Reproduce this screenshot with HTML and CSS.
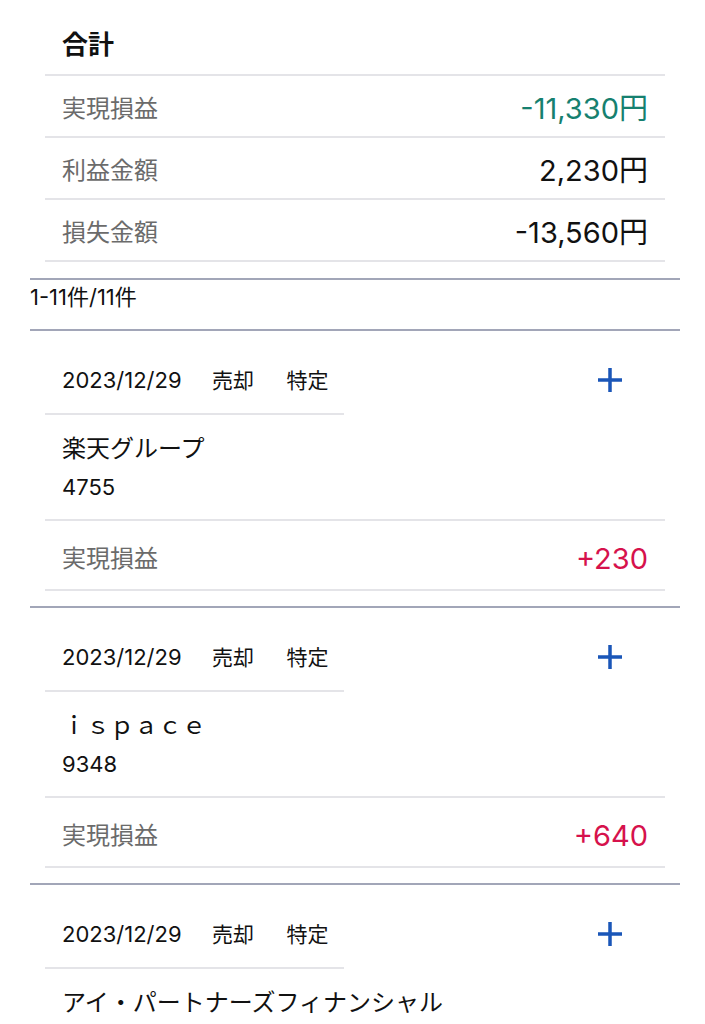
FILE: index.html
```html
<!DOCTYPE html>
<html lang="ja">
<head>
    <meta charset="UTF-8">
    <meta name="viewport" content="width=device-width, initial-scale=1.0">
    <title>実現損益</title>
    <link rel="stylesheet" href="styles.css">
</head>
<body>
    <!-- Totals -->
    <div class="summary">
        <h2 class="summary-title">合計</h2>
        <div class="row">
            <span class="row-label">実現損益</span>
            <span class="row-value loss">-11,330円</span>
        </div>
        <div class="row">
            <span class="row-label">利益金額</span>
            <span class="row-value">2,230円</span>
        </div>
        <div class="row">
            <span class="row-label">損失金額</span>
            <span class="row-value">-13,560円</span>
        </div>
    </div>

    <div class="list">
        <div class="list-count">1-11件/11件</div>

        <div class="card">
            <div class="card-head">
                <div class="card-meta">
                    <span class="trade-date">2023/12/29</span>
                    <span class="trade-tag">売却</span>
                    <span class="trade-tag">特定</span>
                </div>
                <button class="expand" type="button" aria-label="詳細">
                    <svg width="26" height="26" viewBox="0 0 26 26"><path d="M13 1v24M1 13h24" stroke="#1a56b8" stroke-width="3.5" fill="none"/></svg>
                </button>
            </div>
            <div class="card-body">
                <div class="stock-name">楽天グループ</div>
                <div class="stock-code">4755</div>
            </div>
            <div class="card-row">
                <span class="row-label">実現損益</span>
                <span class="row-value gain">+230</span>
            </div>
        </div>

        <div class="card">
            <div class="card-head">
                <div class="card-meta">
                    <span class="trade-date">2023/12/29</span>
                    <span class="trade-tag">売却</span>
                    <span class="trade-tag">特定</span>
                </div>
                <button class="expand" type="button" aria-label="詳細">
                    <svg width="26" height="26" viewBox="0 0 26 26"><path d="M13 1v24M1 13h24" stroke="#1a56b8" stroke-width="3.5" fill="none"/></svg>
                </button>
            </div>
            <div class="card-body">
                <div class="stock-name">ｉｓｐａｃｅ</div>
                <div class="stock-code">9348</div>
            </div>
            <div class="card-row">
                <span class="row-label">実現損益</span>
                <span class="row-value gain">+640</span>
            </div>
        </div>

        <div class="card">
            <div class="card-head">
                <div class="card-meta">
                    <span class="trade-date">2023/12/29</span>
                    <span class="trade-tag">売却</span>
                    <span class="trade-tag">特定</span>
                </div>
                <button class="expand" type="button" aria-label="詳細">
                    <svg width="26" height="26" viewBox="0 0 26 26"><path d="M13 1v24M1 13h24" stroke="#1a56b8" stroke-width="3.5" fill="none"/></svg>
                </button>
            </div>
            <div class="card-body">
                <div class="stock-name">アイ・パートナーズフィナンシャル</div>
                <div class="stock-code">7345</div>
            </div>
            <div class="card-row">
                <span class="row-label">実現損益</span>
                <span class="row-value gain">+120</span>
            </div>
        </div>
    </div>
</body>
</html>
```

FILE: styles.css
```css
body {
    margin: 0;
    background-color: #fff;
    color: #111;
    font-family: Inter, "Noto Sans CJK JP", sans-serif;
}

/* Totals */
.summary {
    margin: 0 40px 0 45px;
}
.summary-title {
    margin: 0;
    padding: 28px 17px 12px;
    font-size: 26px;
    font-weight: bold;
    line-height: 34px;
    border-bottom: 2px solid #e4e4e8;
}
.row {
    display: flex;
    justify-content: space-between;
    align-items: center;
    height: 60px;
    padding: 0 17px;
    border-bottom: 2px solid #e4e4e8;
}
.row-label {
    font-size: 24px;
    color: #6b6b6b;
}
.row-value {
    font-size: 29px;
    color: #111;
}
.row-value.loss {
    color: #16806f;
}
.row-value.gain {
    color: #d6124c;
}

/* List */
.list {
    margin: 16px 25px 0 30px;
    border-top: 2px solid #a2a6b8;
}
.list-count {
    font-size: 22px;
    line-height: 34px;
    padding-bottom: 15px;
}
.card {
    border-top: 2px solid #a2a6b8;
    padding: 0 15px 15px;
}
.card-head {
    display: flex;
    justify-content: space-between;
    align-items: flex-start;
}
.card-meta {
    width: 282px;
    padding: 32px 0 14px 17px;
    line-height: 34px;
    white-space: nowrap;
    border-bottom: 2px solid #e4e4e8;
}
.trade-date {
    font-size: 22px;
    margin-right: 26px;
}
.trade-tag {
    font-size: 21px;
    margin-right: 28px;
}
.trade-tag:last-child {
    margin-right: 0;
}
.expand {
    margin: 36px 42px 0 0;
    padding: 0;
    border: none;
    background: none;
    display: flex;
}
.card-body {
    padding: 17px 17px 16px;
    border-bottom: 2px solid #e4e4e8;
}
.stock-name {
    font-size: 24px;
    line-height: 34px;
}
.stock-code {
    font-size: 22px;
    line-height: 32px;
    margin-top: 5px;
}
.card-row {
    display: flex;
    justify-content: space-between;
    align-items: center;
    padding: 22px 17px 14px;
    line-height: 32px;
    border-bottom: 2px solid #e4e4e8;
}
```
